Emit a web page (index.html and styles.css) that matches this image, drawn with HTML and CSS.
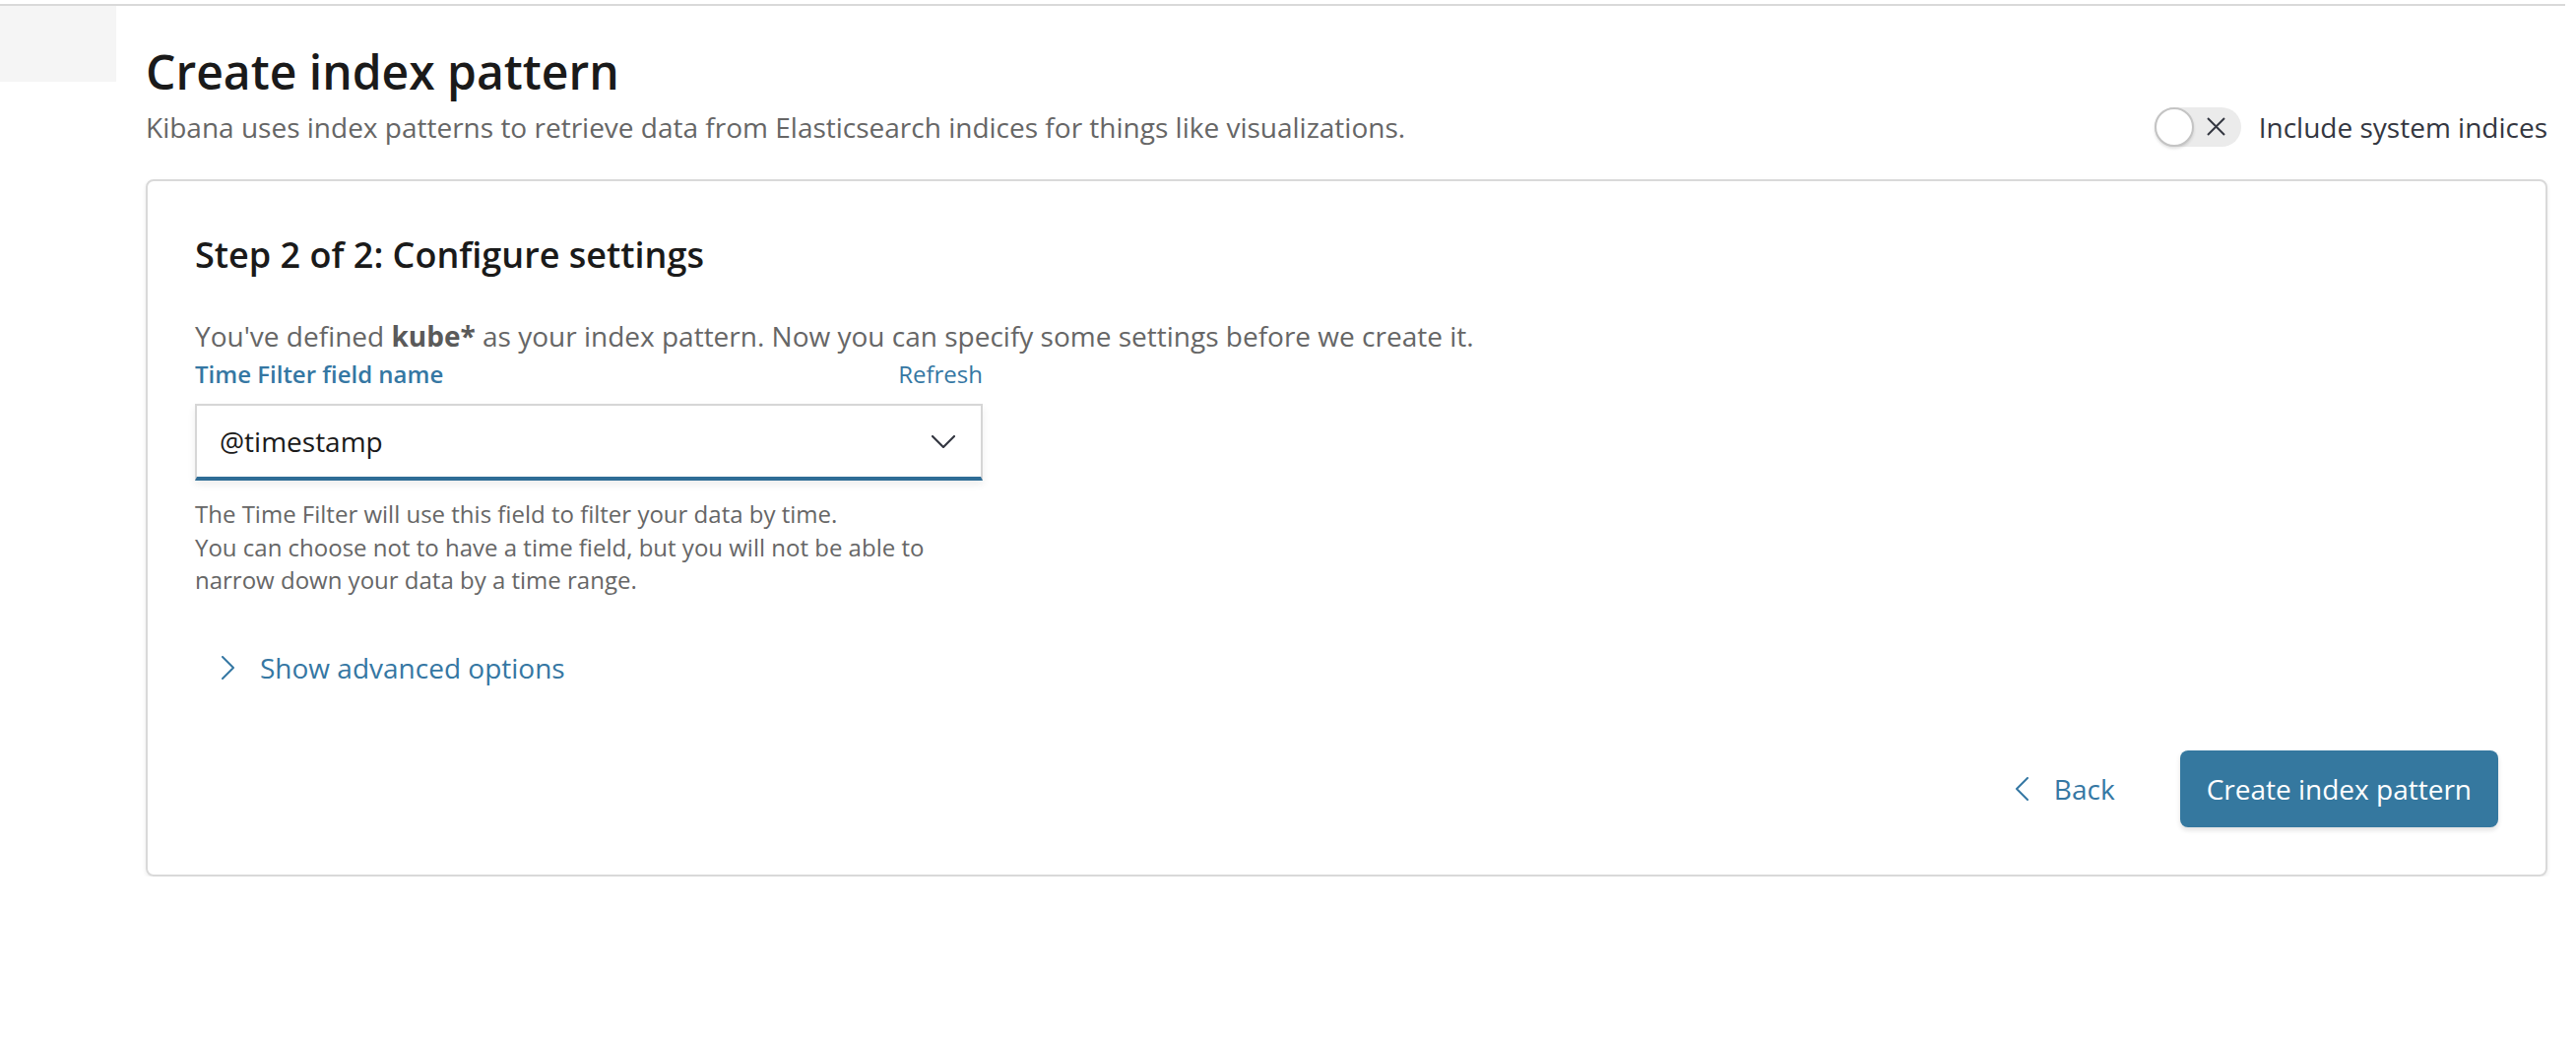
FILE: index.html
```html
<!DOCTYPE html>
<html lang="en">
<head>
<meta charset="utf-8">
<title>Create index pattern</title>
<link rel="stylesheet" href="styles.css">
</head>
<body>
<div class="topline"></div>
<div class="layout">
  <div class="side"></div>
  <main class="main">
    <h1 class="title">Create index pattern</h1>
    <div class="subrow">
      <p class="subtitle">Kibana uses index patterns to retrieve data from Elasticsearch indices for things like visualizations.</p>
      <div class="switch-wrap">
        <span class="switch">
          <span class="switch-knob"></span>
          <svg class="switch-x" width="21" height="19" viewBox="0 0 21 19"><path d="M2 1 L19 18 M19 1 L2 18" stroke="#343741" stroke-width="2" fill="none"/></svg>
        </span>
        <span class="switch-label">Include system indices</span>
      </div>
    </div>

    <section class="card">
      <h2 class="step">Step 2 of 2: Configure settings</h2>
      <p class="desc">You've defined <strong>kube*</strong> as your index pattern. Now you can specify some settings before we create it.</p>
      <div class="field">
        <div class="label-row">
          <span class="label">Time Filter field name</span>
          <span class="refresh">Refresh</span>
        </div>
        <div class="select">
          <span class="select-value">@timestamp</span>
          <svg class="chev-down" width="24" height="13" viewBox="0 0 24 13"><path d="M1 1 L12 12 L23 1" stroke="#343741" stroke-width="2.2" fill="none" stroke-linecap="round" stroke-linejoin="round"/></svg>
        </div>
        <p class="help">The Time Filter will use this field to filter your data by time.<br>You can choose not to have a time field, but you will not be able to narrow down your data by a time range.</p>
      </div>
      <div class="advanced">
        <svg width="13" height="24" viewBox="0 0 13 24"><path d="M1 1 L12 12 L1 23" stroke="#3577a3" stroke-width="2" fill="none" stroke-linecap="round" stroke-linejoin="round"/></svg>
        <span>Show advanced options</span>
      </div>
      <div class="actions">
        <div class="back">
          <svg width="14" height="24" viewBox="0 0 14 24"><path d="M13 1 L2 12 L13 23" stroke="#3577a3" stroke-width="2" fill="none" stroke-linecap="round" stroke-linejoin="round"/></svg>
          <span>Back</span>
        </div>
        <div class="primary">Create index pattern</div>
      </div>
    </section>
  </main>
</div>
</body>
</html>
```
FILE: styles.css
```css
* { box-sizing: border-box; }
html, body { margin: 0; padding: 0; background: #fff; }
body {
  font-family: "Open Sans", "Noto Sans", "Liberation Sans", sans-serif;
  color: #343741;
  width: 2616px;
}
.topline {
  margin-top: 4px;
  height: 2px;
  width: 2605px;
  background: #d9d9d9;
}
.layout { display: flex; align-items: flex-start; }
.side {
  width: 118px;
  height: 77px;
  background: #f5f5f5;
  flex: none;
}
.main {
  margin-left: 30px;
  width: 2439px;
  padding-top: 38px;
}
.title {
  margin: 0;
  font-size: 48px;
  line-height: 58px;
  font-weight: 600;
  color: #1a1a1a;
}
.subrow {
  margin-top: 7px;
  height: 40px;
  display: flex;
  justify-content: space-between;
  align-items: center;
}
.subtitle {
  margin: 0;
  font-size: 28px;
  line-height: 40px;
  color: #666;
}
.switch-wrap { display: flex; align-items: center; gap: 18px; }
.switch {
  position: relative;
  width: 88px;
  height: 40px;
  border-radius: 20px;
  background: #ebebeb;
  display: block;
}
.switch-knob {
  position: absolute;
  left: 0;
  top: 0;
  width: 40px;
  height: 40px;
  border-radius: 50%;
  background: #fff;
  border: 2px solid #c4c4c4;
  box-shadow: 0 2px 3px rgba(0,0,0,0.12);
}
.switch-x { position: absolute; left: 52px; top: 10px; }
.switch-label { font-size: 28px; line-height: 40px; color: #343741; }

.card {
  margin-top: 33px;
  border: 2px solid #d9d9d9;
  border-radius: 8px;
  padding: 48px;
  box-shadow: 0 2px 4px rgba(0,0,0,0.08);
}
.step {
  margin: 0;
  font-size: 36px;
  line-height: 54px;
  font-weight: 600;
  color: #1a1a1a;
}
.desc {
  margin: 34px 0 0;
  font-size: 28px;
  line-height: 42px;
  color: #666;
}
.desc strong { font-weight: 700; color: #5a5a5a; }
.field { width: 800px; }
.label-row {
  display: flex;
  justify-content: space-between;
  align-items: baseline;
  font-size: 24px;
  line-height: 36px;
}
.label { font-weight: 600; color: #3577a3; }
.refresh { color: #3577a3; }
.select {
  margin-top: 12px;
  height: 78px;
  border: 2px solid #d6d6d6;
  border-bottom: 4px solid #2f6d96;
  display: flex;
  align-items: center;
  justify-content: space-between;
  padding: 0 26px 0 23px;
  box-shadow: 0 4px 8px rgba(0,0,0,0.07);
}
.select-value { font-size: 28px; line-height: 40px; color: #1a1a1a; }
.help {
  margin: 17px 0 0;
  font-size: 24px;
  line-height: 33.5px;
  color: #666;
}
.advanced {
  margin-top: 51px;
  display: flex;
  align-items: center;
  gap: 26px;
  padding-left: 27px;
  font-size: 28px;
  line-height: 42px;
  color: #3577a3;
}
.actions {
  margin-top: 63px;
  display: flex;
  justify-content: flex-end;
  align-items: center;
}
.back {
  display: flex;
  align-items: center;
  gap: 26px;
  font-size: 28px;
  line-height: 42px;
  color: #3577a3;
  margin-right: 66px;
}
.primary {
  height: 78px;
  padding: 0 27px;
  border-radius: 8px;
  background: #35789f;
  color: #fff;
  font-size: 28px;
  display: flex;
  align-items: center;
  box-shadow: 0 3px 5px rgba(0,0,0,0.12);
}
```
